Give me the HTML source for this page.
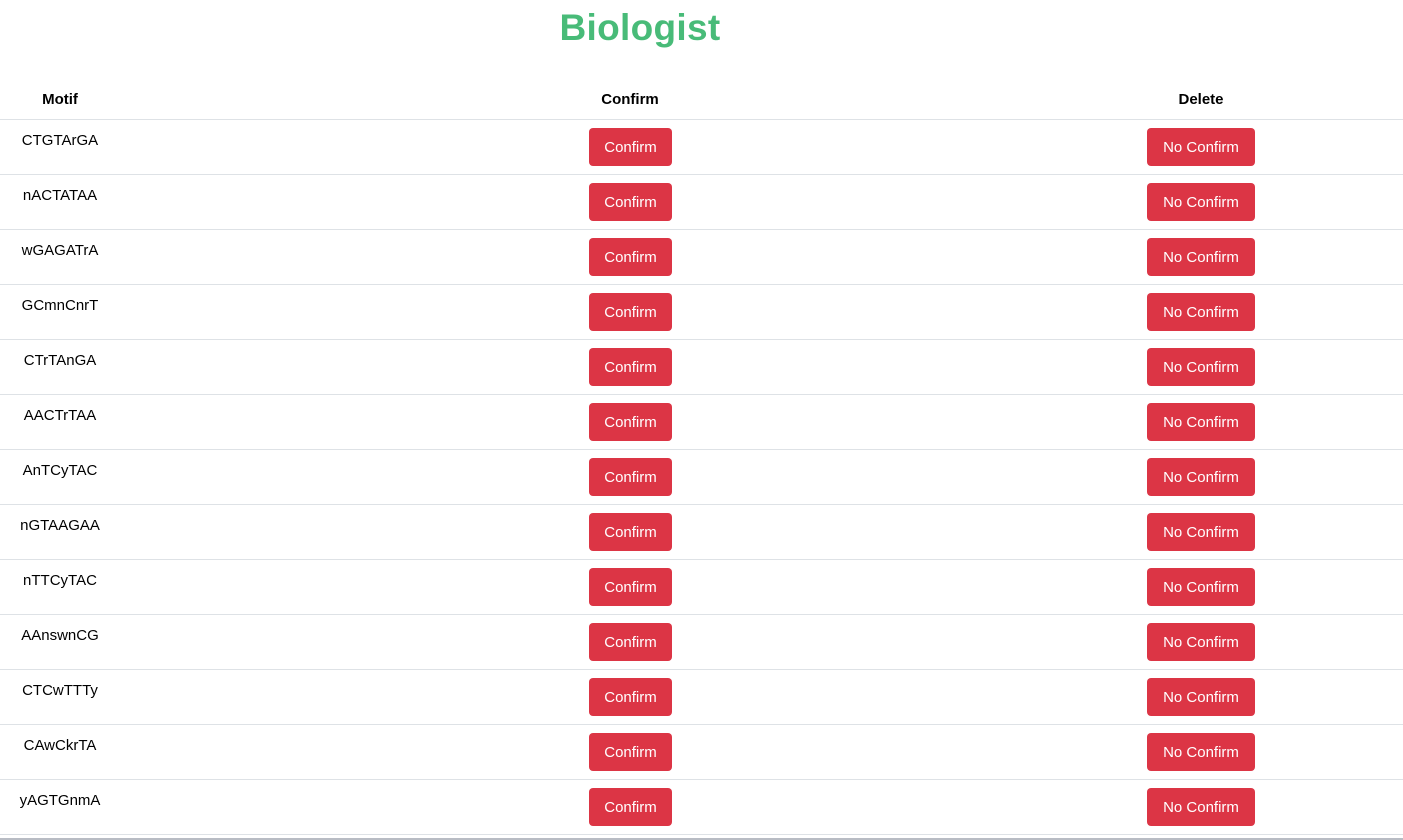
<!DOCTYPE html>
<html><head><style>
body{margin:0;width:1403px;height:840px;overflow:hidden;background:#fff;font-family:"Liberation Sans",sans-serif;color:#000;position:relative}
h1{position:absolute;left:0;width:1280px;top:6px;margin:0;text-align:center;font-size:37px;line-height:44px;color:#48bb78;font-weight:bold;letter-spacing:0.3px}
.h{position:absolute;top:91px;font-weight:bold;font-size:15px;line-height:18px;text-align:center}
.row{position:absolute;left:0;width:1403px;height:55px;border-top:1px solid #dee2e6;box-sizing:border-box}
.m{position:absolute;left:0;width:120px;top:12px;line-height:18px;text-align:center;font-size:15px}
.b{position:absolute;top:8px;height:38px;background:#dc3545;color:#fff;border-radius:4px;font-size:15px;line-height:40px;text-align:center}
.c{left:589px;width:83px}.d{left:1147px;width:108px}
</style></head><body>
<h1>Biologist</h1>
<div class="h" style="left:0;width:120px">Motif</div>
<div class="h" style="left:580px;width:100px">Confirm</div>
<div class="h" style="left:1151px;width:100px">Delete</div>
<div class="row" style="top:119px"><div class="m">CTGTArGA</div><div class="b c">Confirm</div><div class="b d">No Confirm</div></div>
<div class="row" style="top:174px"><div class="m">nACTATAA</div><div class="b c">Confirm</div><div class="b d">No Confirm</div></div>
<div class="row" style="top:229px"><div class="m">wGAGATrA</div><div class="b c">Confirm</div><div class="b d">No Confirm</div></div>
<div class="row" style="top:284px"><div class="m">GCmnCnrT</div><div class="b c">Confirm</div><div class="b d">No Confirm</div></div>
<div class="row" style="top:339px"><div class="m">CTrTAnGA</div><div class="b c">Confirm</div><div class="b d">No Confirm</div></div>
<div class="row" style="top:394px"><div class="m">AACTrTAA</div><div class="b c">Confirm</div><div class="b d">No Confirm</div></div>
<div class="row" style="top:449px"><div class="m">AnTCyTAC</div><div class="b c">Confirm</div><div class="b d">No Confirm</div></div>
<div class="row" style="top:504px"><div class="m">nGTAAGAA</div><div class="b c">Confirm</div><div class="b d">No Confirm</div></div>
<div class="row" style="top:559px"><div class="m">nTTCyTAC</div><div class="b c">Confirm</div><div class="b d">No Confirm</div></div>
<div class="row" style="top:614px"><div class="m">AAnswnCG</div><div class="b c">Confirm</div><div class="b d">No Confirm</div></div>
<div class="row" style="top:669px"><div class="m">CTCwTTTy</div><div class="b c">Confirm</div><div class="b d">No Confirm</div></div>
<div class="row" style="top:724px"><div class="m">CAwCkrTA</div><div class="b c">Confirm</div><div class="b d">No Confirm</div></div>
<div class="row" style="top:779px;border-bottom:1px solid #dee2e6;height:56px"><div class="m">yAGTGnmA</div><div class="b c">Confirm</div><div class="b d">No Confirm</div></div>
<div style="position:absolute;left:0;top:838px;width:1403px;height:2px;background:#b8bcc4"></div>
</body></html>
